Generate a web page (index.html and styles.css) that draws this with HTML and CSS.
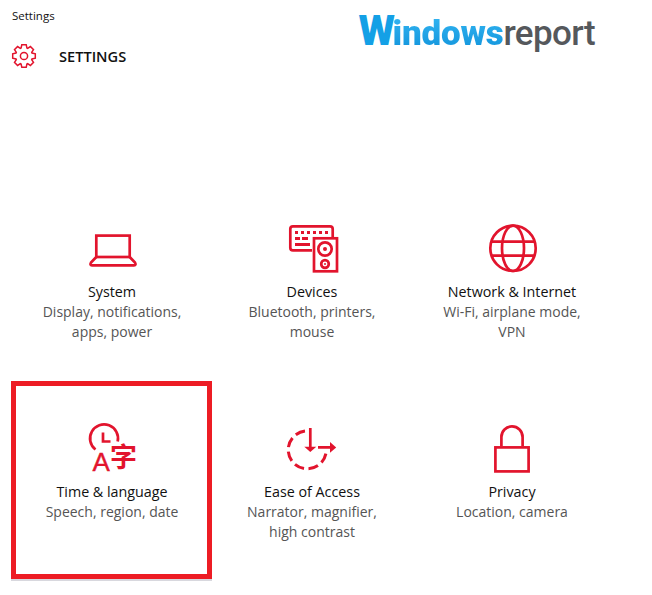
FILE: index.html
```html
<!DOCTYPE html>
<html>
	<head>
		<meta charset="utf-8">
		<title>Settings</title>

		<link rel="stylesheet" href="styles.css">
	</head>
	<body>
		<div class="header">
			<div class="heading">
				<div class="window-title">Settings</div>
				<div class="page-title">
					<svg class="gear" viewBox="-13 -13 26 26">
						<polygon points="-2.9,-8 -2.2,-11.3 2.2,-11.3 2.9,-8 3.6,-7.7 6.4,-9.5 9.5,-6.4 7.7,-3.6 8,-2.9 11.3,-2.2 11.3,2.2 8,2.9 7.7,3.6 9.5,6.4 6.4,9.5 3.6,7.7 2.9,8 2.2,11.3 -2.2,11.3 -2.9,8 -3.6,7.7 -6.4,9.5 -9.5,6.4 -7.7,3.6 -8,2.9 -11.3,2.2 -11.3,-2.2 -8,-2.9 -7.7,-3.6 -9.5,-6.4 -6.4,-9.5 -3.6,-7.7"/>
						<circle r="3.6"/>
					</svg>
					<span>SETTINGS</span>
				</div>
			</div>
			<div class="logo"><span class="logo-w">W</span><span class="logo-blue">indows</span><span class="logo-grey">report</span></div>
		</div>

		<div class="grid">
			<div class="tile">
				<svg class="icon" viewBox="84 221 56 56">
					<rect x="96.3" y="235.6" width="33.4" height="21.4"/>
					<path d="M96.3 257 L91 262.5 Q89.5 265.4 92 265.4 H134 Q136.5 265.4 135 262.5 L129.7 257"/>
				</svg>
				<div class="label">System</div>
				<div class="desc">Display, notifications,<br>apps, power</div>
			</div>
			<div class="tile">
				<svg class="icon" viewBox="284 221 56 56">
					<path d="M312 250.4 H293 Q290.3 250.4 290.3 247.7 V229 Q290.3 226.3 293 226.3 H330 Q332.7 226.3 332.7 229 V237"/>
					<rect x="314" y="238.3" width="23" height="33"/>
					<circle cx="325" cy="249" r="6.7"/>
					<circle cx="325" cy="264" r="3.8"/>
					<g class="solid">
						<rect x="295" y="231" width="3" height="3"/>
						<rect x="301" y="231" width="3" height="3"/>
						<rect x="307" y="231" width="3" height="3"/>
						<rect x="313" y="231" width="3" height="3"/>
						<rect x="319" y="231" width="3" height="3"/>
						<rect x="325" y="231" width="3" height="3"/>
						<rect x="295" y="237" width="5" height="3"/>
						<rect x="302" y="237" width="6" height="3"/>
						<rect x="295" y="243" width="15" height="3"/>
						<circle cx="325" cy="249" r="2"/>
						<circle cx="325" cy="264" r="1"/>
					</g>
				</svg>
				<div class="label">Devices</div>
				<div class="desc">Bluetooth, printers,<br>mouse</div>
			</div>
			<div class="tile">
				<svg class="icon" viewBox="484 221 56 56">
					<circle cx="513" cy="248.3" r="22.7"/>
					<ellipse cx="513" cy="248.3" rx="11" ry="22.7"/>
					<path d="M492 241.7 H534 M492 255.7 H534"/>
				</svg>
				<div class="label">Network &amp; Internet</div>
				<div class="desc">Wi-Fi, airplane mode,<br>VPN</div>
			</div>
			<div class="tile active">
				<svg class="icon" viewBox="84 421 56 56">
					<path d="M95.5 449.5 A14 14 0 1 1 117.7 441.5"/>
					<path d="M103 432.5 V441.5 H110.5"/>
					<text class="glyph-a" x="92.5" y="470.5">A</text>
					<text class="glyph-zi" x="110" y="467">字</text>
				</svg>
				<div class="label">Time &amp; language</div>
				<div class="desc">Speech, region, date</div>
			</div>
			<div class="tile">
				<svg class="icon" viewBox="284 421 56 56">
					<path class="dashed" d="M305 431 A19 19 0 1 0 326 453"/>
					<path d="M310.3 428 V447 M318 447.3 H331"/>
					<polygon class="solid" points="304.3,446.7 316.3,446.7 310.3,452"/>
					<polygon class="solid" points="330,442 330,452.8 336.2,447.4"/>
				</svg>
				<div class="label">Ease of Access</div>
				<div class="desc">Narrator, magnifier,<br>high contrast</div>
			</div>
			<div class="tile">
				<svg class="icon" viewBox="484 421 56 56">
					<rect x="495.4" y="447.4" width="33.2" height="24"/>
					<path d="M501.4 446 V437 A10.6 10.6 0 0 1 522.6 437 V446"/>
				</svg>
				<div class="label">Privacy</div>
				<div class="desc">Location, camera</div>
			</div>
		</div>
	</body>
</html>
```

FILE: styles.css
```css
* {
	margin: 0;
	padding: 0;
	box-sizing: border-box;
}

body {
	background: #ffffff;
	font-family: "Open Sans", "Liberation Sans", sans-serif;
	color: #111111;
}

.header {
	display: flex;
	justify-content: space-between;
	height: 181px;
	padding: 8px 57px 0 12px;
}

.window-title {
	font-size: 11.5px;
	line-height: 15px;
}

.page-title {
	display: flex;
	align-items: center;
	gap: 22px;
	margin-top: 20px;
	font-size: 14.6px;
	font-weight: 600;
	line-height: 26px;
}

.gear {
	width: 26px;
	height: 26px;
	margin-left: -1px;
	fill: none;
	stroke: #e2142d;
	stroke-width: 1.5;
}

.logo {
	display: flex;
	align-items: baseline;
	height: 44px;
	margin-top: 1px;
	font-family: Roboto, "Liberation Sans", sans-serif;
	font-size: 35px;
	line-height: 44px;
}

.logo-w {
	font-weight: 900;
	font-size: 42px;
	letter-spacing: -2.6px;
	color: #14a0e6;
}

.logo-blue {
	font-weight: 900;
	letter-spacing: -0.2px;
	background: linear-gradient(#36b8f4, #0d8fd8);
	-webkit-background-clip: text;
	background-clip: text;
	color: transparent;
}

.logo-grey {
	font-weight: 500;
	letter-spacing: -0.6px;
	color: #55585c;
}

.grid {
	display: grid;
	grid-template-columns: repeat(3, 200px);
	grid-auto-rows: 200px;
	margin-left: 12px;
}

.tile {
	position: relative;
	display: flex;
	flex-direction: column;
	align-items: center;
	padding-top: 40px;
	text-align: center;
}

.tile.active::after {
	content: "";
	position: absolute;
	top: 0;
	left: -1px;
	right: 0;
	bottom: 2px;
	border: 5px solid #ed1c24;
	box-shadow: 0 2px 0 #d8d8de;
}

.icon {
	width: 56px;
	height: 56px;
	margin-bottom: 5px;
	fill: none;
	stroke: #e2142d;
	stroke-width: 2.7;
}

.icon .solid {
	fill: #e2142d;
	stroke: none;
}

.icon .dashed {
	stroke-dasharray: 10 4.6;
	stroke-width: 3;
}

.glyph-a {
	font-family: "Liberation Sans", sans-serif;
	font-size: 26px;
	fill: #e2142d;
	stroke: #e2142d;
	stroke-width: 0.4;
}

.glyph-zi {
	font-family: "Noto Sans CJK SC", sans-serif;
	font-size: 27px;
	font-weight: 700;
	fill: #e2142d;
	stroke: none;
}

.label {
	font-size: 14.3px;
	line-height: 20px;
	color: #111111;
}

.desc {
	font-size: 14px;
	line-height: 20px;
	color: #555555;
}
```
